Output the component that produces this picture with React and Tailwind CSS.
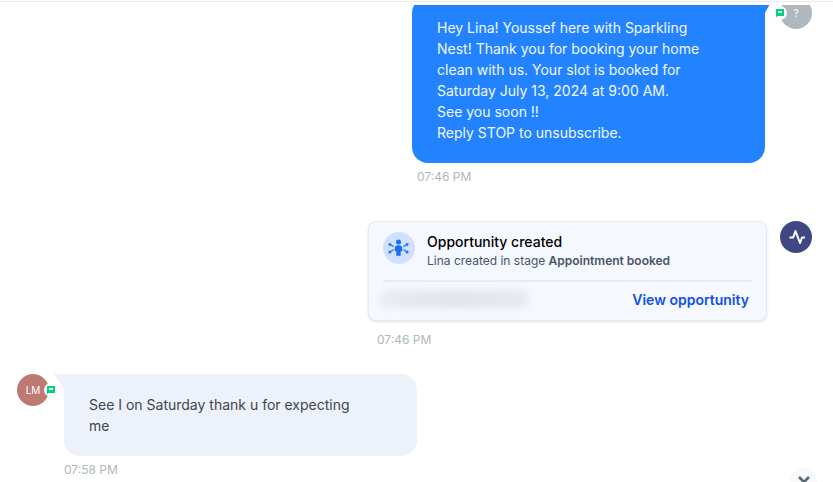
import React from "react";

function SmsBadge({ side }) {
  return (
    <span
      className={
        "absolute top-[9px] flex size-[14px] items-center justify-center rounded-full bg-[#f9fbfd] " +
        (side === "left" ? "-left-[7px]" : "-right-[9px]")
      }
    >
      <svg viewBox="0 0 8 8" className="size-2" shapeRendering="crispEdges" aria-label="SMS">
        <path d="M0 0h8v7H2L0 8z" fill="#08d07c" />
        <path d="M2 2h4v2H2z" fill="#d2f7e6" />
      </svg>
    </span>
  );
}

function Avatar({ children, className }) {
  return (
    <div
      className={
        "relative flex size-8 shrink-0 items-center justify-center rounded-full text-[10px] text-white " + className
      }
    >
      {children}
    </div>
  );
}

function Time({ children, className }) {
  return <time className={"block text-xs leading-[18px] text-[#aeb7ba] " + className}>{children}</time>;
}

function OpportunityIcon() {
  return (
    <div className="flex size-8 shrink-0 items-center justify-center rounded-full bg-[#d1e0ff]">
      <svg viewBox="0 0 22 18" className="h-[18px] w-[22px]" fill="none" stroke="#156ff5" strokeWidth="1.3" strokeLinecap="round">
        <circle cx="10.500" cy="3" r="2.500" fill="#156ff5" stroke="none" />
        <path d="M6.800 9.500a3.700 3.300 0 0 1 7.400 0V12.300h-1.500V16.800h-4.400V12.300H6.800z" fill="#156ff5" stroke="none" />
        <path d="M5.200 7.300 2.200 5.600M5.200 11 2.200 12.800M15.800 7.300 18.800 5.600M15.800 11 18.800 12.800" />
        <g fill="#156ff5" stroke="none">
          <path d="M.4 4.200h3.200L1 7.400zM20.600 4.200h-3.200L20 7.400zM.4 14.200h3.200L1 11zM20.600 14.200h-3.200L20 11z" />
        </g>
      </svg>
    </div>
  );
}

export default function App() {
  return (
    <div className="relative flex h-screen flex-col overflow-hidden bg-white font-['Inter',sans-serif]">
      <div className="h-[5px] shrink-0 pt-px">
        <div className="h-px bg-[#eaebec]" />
      </div>
      <main className="min-h-0 flex-1 overflow-hidden">
        <div className="-mt-2 pr-[21px] pl-[17px]">
          <article className="flex items-start justify-end gap-[15px]">
            <div className="w-[353px]">
              <div className="relative rounded-b-[16px] rounded-tl-[16px] bg-[#2383ff] py-5 pr-14 pl-[25px] text-sm leading-[21px] text-[#f1f7ff]">
                <svg viewBox="0 0 10 17" className="absolute top-0 left-full h-[17px] w-[10px]" aria-hidden="true">
                  <path d="M0 0h10Q5 6 0 16z" fill="#2383ff" />
                </svg>
                <p>
                  Hey Lina! Youssef here with Sparkling Nest! Thank you for booking your home clean with us. Your slot
                  is booked for Saturday July 13, 2024 at 9:00 AM.
                </p>
                <p>See you soon !!</p>
                <p>Reply STOP to unsubscribe.</p>
              </div>
              <Time className="mt-[5px] pl-[5px]">07:46 PM</Time>
            </div>
            <Avatar className="bg-[#b0b7bd]">
              ?
              <SmsBadge side="left" />
            </Avatar>
          </article>

          <article className="mt-[35px] flex items-start justify-end gap-[13px]">
            <div className="w-[399px]">
              <section className="rounded-lg border border-[#e7e9f0] bg-[#f5f8ff] px-3.5 pt-2.5 shadow-sm">
                <div className="box-content flex h-12 gap-3 border-b-2 border-[#e9eaee]">
                  <OpportunityIcon />
                  <div>
                    <h2 className="text-sm leading-5 font-medium text-black">Opportunity created</h2>
                    <p className="text-xs leading-[18px] text-[#475467]">
                      Lina created in stage <strong className="font-semibold">Appointment booked</strong>
                    </p>
                  </div>
                </div>
                <div className="flex h-[38px] items-start justify-between pt-2">
                  <div className="-ml-1 h-[18px] w-[150px] rounded-full bg-linear-to-r from-[#e9ecf3] via-[#e1e4eb] to-[#e7eaf1] blur-[3px]" />
                  <a href="#opportunity" className="pr-[3px] text-sm leading-5 font-semibold text-[#1150e8]">
                    View opportunity
                  </a>
                </div>
              </section>
              <Time className="mt-[10px] pl-[9px]">07:46 PM</Time>
            </div>
            <Avatar className="bg-[#3e4784] pl-0.5">
              <svg viewBox="0 0 16 16" className="size-4" fill="none" stroke="#fff" strokeWidth="2" strokeLinejoin="round" aria-label="Activity">
                <path d="M.5 8.500H4.200L6.500 2l4.500 12 2-5.500h3" />
              </svg>
            </Avatar>
          </article>

          <article className="mt-[25px] flex items-start gap-[15px]">
            <Avatar className="bg-[#bd7a72]">
              LM
              <SmsBadge side="right" />
            </Avatar>
            <div className="w-[353px]">
              <div className="relative rounded-b-[16px] rounded-tr-[16px] bg-[#edf1f9] py-5 pr-14 pl-[25px] text-sm leading-[21px] text-[#42464c]">
                <svg viewBox="0 0 10 17" className="absolute top-0 right-full h-[17px] w-[10px]" aria-hidden="true">
                  <path d="M10 0H0Q5 6 10 16z" fill="#edf1f9" />
                </svg>
                <p>See I on Saturday thank u for expecting me</p>
              </div>
              <Time className="mt-[5px]">07:58 PM</Time>
            </div>
          </article>
        </div>
      </main>
      <button
        type="button"
        aria-label="Scroll to latest"
        className="absolute right-4 -bottom-[13px] flex size-[27px] items-start justify-center rounded-full bg-[#f8f9fa] pt-2"
      >
        <svg viewBox="0 0 12 8" className="h-2 w-3" fill="none" stroke="#566774" strokeWidth="2.600">
          <path d="M1 1l5 5 5-5" />
        </svg>
      </button>
    </div>
  );
}
